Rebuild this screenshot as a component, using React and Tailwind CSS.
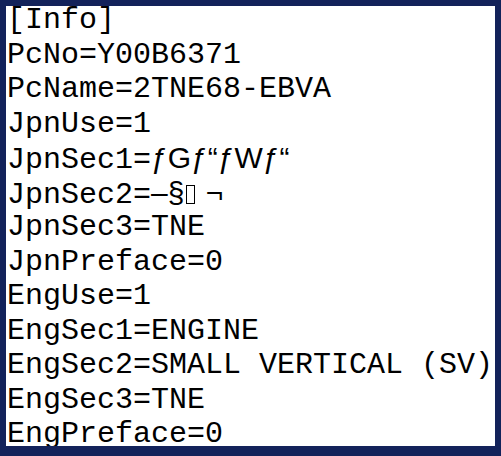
const lines = [
  '[Info]',
  'PcNo=Y00B6371',
  'PcName=2TNE68-EBVA',
  'JpnUse=1',
  null,
  null,
  'JpnSec3=TNE',
  'JpnPreface=0',
  'EngUse=1',
  'EngSec1=ENGINE',
  'EngSec2=SMALL VERTICAL (SV)',
  'EngSec3=TNE',
  'EngPreface=0',
];

function Line({ children }) {
  return <div className="h-[34.5px] whitespace-pre">{children}</div>;
}

export default function App() {
  return (
    <div className="w-[501px] h-[456px] bg-[#13225a] pt-[6px] pl-[6px] pr-[6px] pb-[10px]">
      <div className="w-full h-full bg-white overflow-hidden">
        <div
          className="-mt-[3px] pl-[1px] text-[30px] leading-[34.5px] text-black"
          style={{ fontFamily: '"Liberation Mono", "Courier New", monospace' }}
        >
          {lines.map((l, i) => {
            if (i === 4) {
              return (
                <Line key={i}>
                  JpnSec1=
                  <span className="font-['Liberation_Sans',sans-serif]">ƒGƒ“ƒWƒ“</span>
                </Line>
              );
            }
            if (i === 5) {
              return (
                <Line key={i}>
                  JpnSec2=
                  <span className="font-['Liberation_Sans',sans-serif]">
                    –§
                    <span className="inline-block w-[9px] h-[19px] border border-black align-[-1px] mx-[2px]" />
                    {' '}¬
                  </span>
                </Line>
              );
            }
            return <Line key={i}>{l}</Line>;
          })}
        </div>
      </div>
    </div>
  );
}
